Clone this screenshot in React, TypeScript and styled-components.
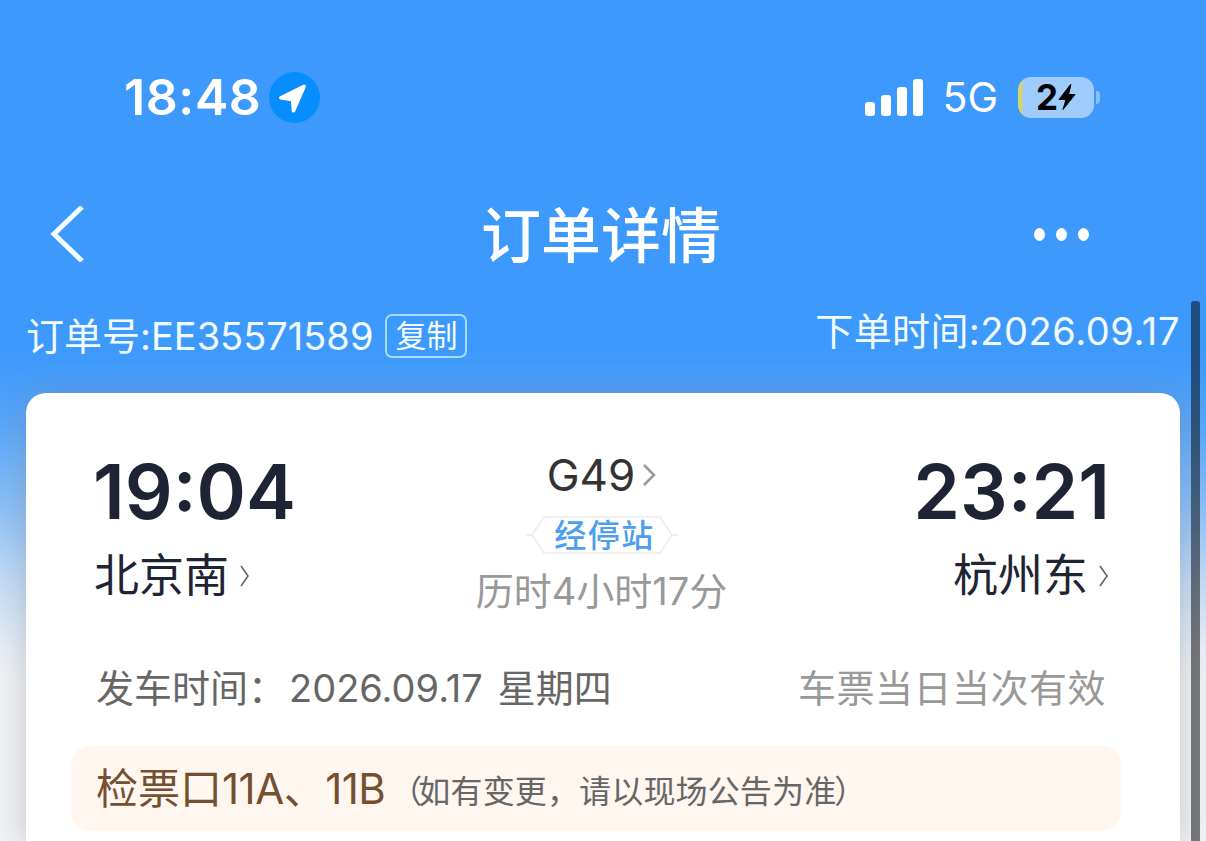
import styled, { createGlobalStyle } from 'styled-components';

const GlobalStyle = createGlobalStyle`
  * {
    box-sizing: border-box;
  }

  body {
    margin: 0;
    overflow: hidden;
    font-family: Inter, 'Noto Sans CJK SC', sans-serif;
  }
`;

const Page = styled.div`
  position: relative;
  width: 1206px;
  height: 841px;
  overflow: hidden;
  display: flex;
  flex-direction: column;
  background: linear-gradient(
    180deg,
    #3d99fc 0,
    #3d99fc 350px,
    #4a9ffb 390px,
    #5ba8fa 430px,
    #8cc0f8 510px,
    #c2dbf6 580px,
    #e9eef5 650px,
    #f1f2f4 680px
  );
`;

const StatusBar = styled.div`
  display: flex;
  align-items: center;
  justify-content: space-between;
  height: 194px;
  padding: 0 106px 0 124px;
  color: #fff;
`;

const StatusGroup = styled.div`
  display: flex;
  align-items: center;
`;

const Text = styled.span<{ $size: number; $weight?: number; $color?: string; $track?: number }>`
  font-size: ${({ $size }) => $size}px;
  font-weight: ${({ $weight }) => $weight ?? 400};
  color: ${({ $color }) => $color ?? 'inherit'};
  letter-spacing: ${({ $track }) => $track ?? 0}px;
  line-height: 1;
  white-space: nowrap;
`;

const LocationBadge = styled.div`
  display: flex;
  width: 51px;
  height: 51px;
  margin-left: 8px;
  border-radius: 50%;
  background: #068eff;
`;

const Signal = styled.div`
  display: flex;
  align-items: flex-end;
  gap: 6px;
  height: 37px;
  margin-right: 19px;
`;

const SignalBar = styled.i<{ $height: number }>`
  width: 10px;
  height: ${({ $height }) => $height}px;
  border-radius: 3px;
  background: #fff;
`;

const Battery = styled.div`
  display: flex;
  align-items: center;
  justify-content: center;
  width: 76px;
  height: 41px;
  margin-left: 20px;
  border-radius: 13px;
  background: linear-gradient(90deg, #d3d56f 0, #d3d56f 4px, #a0ccfd 5px);
  color: #000;
`;

const BatteryCap = styled.i`
  width: 4px;
  height: 13px;
  margin-left: 2px;
  border-radius: 0 5px 5px 0;
  background: #85c4fb;
`;

const NavBar = styled.header`
  display: grid;
  grid-template-columns: 1fr 240px 1fr;
  align-items: center;
  height: 80px;
  padding-right: 4px;
  color: #fff;
`;

const NavTitle = styled.h1`
  margin: 2px 0 -2px;
  font-size: 60px;
  font-weight: 500;
  line-height: 80px;
`;

const BackButton = styled.div`
  display: flex;
  padding-left: 50px;
`;

const MoreDots = styled.div`
  display: flex;
  justify-content: flex-end;
  gap: 11px;
  padding-right: 113px;

  i {
    width: 11px;
    height: 13px;
    border-radius: 50%;
    background: #fff;
  }
`;

const OrderRow = styled.div`
  display: flex;
  justify-content: space-between;
  height: 119px;
  padding: 38px 26px 0;
  color: #f2fcff;
`;

const OrderPart = styled.div<{ $top?: number }>`
  display: flex;
  align-items: center;
  height: 46px;
  margin-top: ${({ $top }) => $top ?? 0}px;
`;

const CopyButton = styled.button`
  width: 82px;
  height: 44px;
  margin-left: 12px;
  padding: 0;
  border: 2px solid #a5dcff;
  border-radius: 7px;
  background: transparent;
  color: #f2fcff;
  font: 400 31px/36px 'Noto Sans CJK SC', sans-serif;

  span {
    display: block;
    margin-top: -4px;
  }
`;

const Card = styled.main`
  flex: 1;
  margin: 0 26px;
  padding: 64px 45px 0;
  border-radius: 20px 20px 0 0;
  background: #fff;
  box-shadow: 0 2px 32px rgba(120, 130, 140, 0.4);
`;

const Trip = styled.section`
  display: grid;
  grid-template-columns: 1fr 260px 1fr;
  height: 205px;
  padding: 0 26px 0 23px;
`;

const Stop = styled.div<{ $end?: boolean }>`
  display: flex;
  flex-direction: column;
  align-items: ${({ $end }) => ($end ? 'flex-end' : 'flex-start')};
  color: #1e2433;
`;

const StopTime = styled.time`
  height: 96px;
  margin: 0 -1px;
  font-size: 75px;
  font-weight: 600;
  line-height: 70px;
`;

const Station = styled.div`
  display: flex;
  align-items: center;
  gap: 11px;
  height: 45px;
`;

const Service = styled.div`
  display: flex;
  flex-direction: column;
  align-items: center;
`;

const TrainNumber = styled.div`
  display: flex;
  align-items: center;
  gap: 8px;
  height: 36px;
  color: #333;
`;

const StopsTag = styled.div`
  display: grid;
  place-items: center;
  width: 152px;
  height: 38px;
  margin-top: 23px;

  > * {
    grid-area: 1 / 1;
  }
`;

const TagLabel = styled.span`
  padding: 2px 0 0 6px;
  color: #4d9df0;
  font-size: 32px;
  font-weight: 500;
  letter-spacing: 1.5px;
  line-height: 1;
`;

const Duration = styled.div`
  display: flex;
  align-items: center;
  height: 44px;
  margin-top: 15px;
  color: #999;
`;

const DepartRow = styled.section`
  display: flex;
  align-items: center;
  justify-content: space-between;
  height: 52px;
  padding: 0 29px 0 25px;
  color: #666;
`;

const DepartDate = styled.div`
  display: flex;
  align-items: center;
`;

const DateValue = styled(Text)`
  margin: 0 15px 0 3px;
`;

const GateNotice = styled.section`
  display: flex;
  align-items: center;
  width: 1051px;
  height: 85px;
  margin-top: 32px;
  padding: 0 25px;
  border-radius: 20px;
  background: #fff6f0;
  color: #73502f;
`;

const GateHint = styled(Text)`
  margin: 6px 0 0 5px;
`;

const OpenParen = styled.span`
  letter-spacing: -4px;
`;

const CloseParen = styled.span`
  margin-left: -2px;
`;

const ScrollThumb = styled.div`
  position: absolute;
  top: 301px;
  right: 6px;
  bottom: 0;
  width: 9px;
  border-radius: 3px 3px 0 0;
  background: rgba(0, 0, 0, 0.5);
`;

const BackIcon = () => (
  <svg width="34" height="56" viewBox="0 0 34 56" fill="none" stroke="#f4fdff" strokeWidth="5">
    <path d="M32 1 4 28l28 27" />
  </svg>
);

const LocationIcon = () => (
  <svg width="51" height="51" viewBox="0 0 51 51" fill="#fff" stroke="#fff" strokeWidth="3.5" strokeLinejoin="round">
    <path d="M35.200 14.300 11.800 25.700 23.500 27.800 24.500 38.800z" />
  </svg>
);

const BoltIcon = () => (
  <svg width="18" height="28" viewBox="0 0 18 28">
    <path
      d="M12.500 1.500 1 16.500h7L5 26.500 17 11.500h-6.500l2.500-10z"
      fill="#000"
      stroke="#000"
      strokeLinejoin="round"
    />
  </svg>
);

const Chevron = ({ width, color, stroke }: { width: number; color: string; stroke: number }) => (
  <svg width={width} height="22" viewBox={`0 0 ${width} 22`} fill="none" stroke={color} strokeWidth={stroke}>
    <path d={`M1 1 ${width - 2} 11 1 21`} />
  </svg>
);

const TagOutline = () => (
  <svg width="152" height="38" viewBox="0 0 152 38" fill="none" stroke="#ebebeb" strokeWidth="1.5">
    <path d="M18 1h116l12 18-12 18H18L6 19zM0 19h6M146 19h6" />
  </svg>
);

function App() {
  return (
    <>
      <GlobalStyle />
      <Page>
        <StatusBar>
          <StatusGroup>
            <Text $size={50} $weight={600} $track={0.6}>18:48</Text>
            <LocationBadge>
              <LocationIcon />
            </LocationBadge>
          </StatusGroup>
          <StatusGroup>
            <Signal>
              {[14, 21, 29, 37].map((height) => (
                <SignalBar key={height} $height={height} />
              ))}
            </Signal>
            <Text $size={41}>5G</Text>
            <Battery>
              <Text $size={35} $weight={700}>2</Text>
              <BoltIcon />
            </Battery>
            <BatteryCap />
          </StatusGroup>
        </StatusBar>

        <NavBar>
          <BackButton>
            <BackIcon />
          </BackButton>
          <NavTitle>订单详情</NavTitle>
          <MoreDots>
            <i />
            <i />
            <i />
          </MoreDots>
        </NavBar>

        <OrderRow>
          <OrderPart $top={1}>
            <Text $size={38}>订单号:</Text>
            <Text $size={38}>EE35571589</Text>
            <CopyButton>
              <span>复制</span>
            </CopyButton>
          </OrderPart>
          <OrderPart $top={-4}>
            <Text $size={38} $track={0.4}>下单时间:</Text>
            <Text $size={38} $track={0.6}>2026.09.17</Text>
          </OrderPart>
        </OrderRow>

        <Card>
          <Trip>
            <Stop>
              <StopTime>19:04</StopTime>
              <Station>
                <Text $size={45}>北京南</Text>
                <Chevron width={10} color="#666" stroke={1.6} />
              </Station>
            </Stop>
            <Service>
              <TrainNumber>
                <Text $size={44}>G49</Text>
                <Chevron width={13} color="#999" stroke={2.6} />
              </TrainNumber>
              <StopsTag>
                <TagOutline />
                <TagLabel>经停站</TagLabel>
              </StopsTag>
              <Duration>
                <Text $size={38}>历时4小时17分</Text>
              </Duration>
            </Service>
            <Stop $end>
              <StopTime>23:21</StopTime>
              <Station>
                <Text $size={45}>杭州东</Text>
                <Chevron width={10} color="#666" stroke={1.6} />
              </Station>
            </Stop>
          </Trip>

          <DepartRow>
            <DepartDate>
              <Text $size={38}>发车时间：</Text>
              <DateValue $size={38}>2026.09.17</DateValue>
              <Text $size={38}>星期四</Text>
            </DepartDate>
            <Text $size={38} $color="#999" $track={0.5}>车票当日当次有效</Text>
          </DepartRow>

          <GateNotice>
            <Text $size={42}>检票口</Text>
            <Text $size={42} $track={-0.5}>11A、11B</Text>
            <GateHint $size={32} $color="#666" $track={0.15}>
              <OpenParen>（</OpenParen>
              如有变更，请以现场公告为准
              <CloseParen>）</CloseParen>
            </GateHint>
          </GateNotice>
        </Card>

        <ScrollThumb />
      </Page>
    </>
  );
}

export default App;
